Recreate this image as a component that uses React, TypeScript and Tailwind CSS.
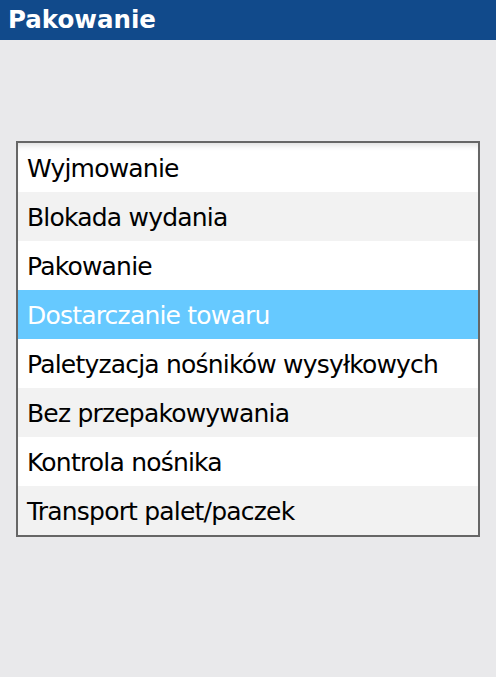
import React, { useState } from "react";

const items = [
  "Wyjmowanie",
  "Blokada wydania",
  "Pakowanie",
  "Dostarczanie towaru",
  "Paletyzacja nośników wysyłkowych",
  "Bez przepakowywania",
  "Kontrola nośnika",
  "Transport palet/paczek",
];

export default function App() {
  const [selected, setSelected] = useState(3);

  return (
    <div
      className="flex flex-col w-[496px] h-[677px] bg-[#e9e9eb]"
      style={{ fontFamily: "'DejaVu Sans', Verdana, sans-serif" }}
    >
      {/* Header */}
      <div className="h-[40px] bg-[#114a8b] flex items-center px-[8px]">
        <h1 className="text-white font-bold text-[24.5px] leading-none">Pakowanie</h1>
      </div>

      {/* List */}
      <div className="pt-[101px] px-[16px]">
        <div className="border-2 border-[#666666] bg-white shadow-[inset_0_6px_6px_-4px_rgba(0,0,0,0.15)]">
          {items.map((item, i) => (
            <button
              key={item}
              onClick={() => setSelected(i)}
              className={
                "flex items-center w-full h-[49px] pl-[9px] pt-[2px] text-left text-[25px] tracking-[-0.8px] " +
                (i === selected
                  ? "bg-[#66c9ff] text-white"
                  : i % 2 === 1
                  ? "bg-[#f2f2f2] text-black"
                  : "bg-transparent text-black")
              }
            >
              {item}
            </button>
          ))}
        </div>
      </div>
    </div>
  );
}
